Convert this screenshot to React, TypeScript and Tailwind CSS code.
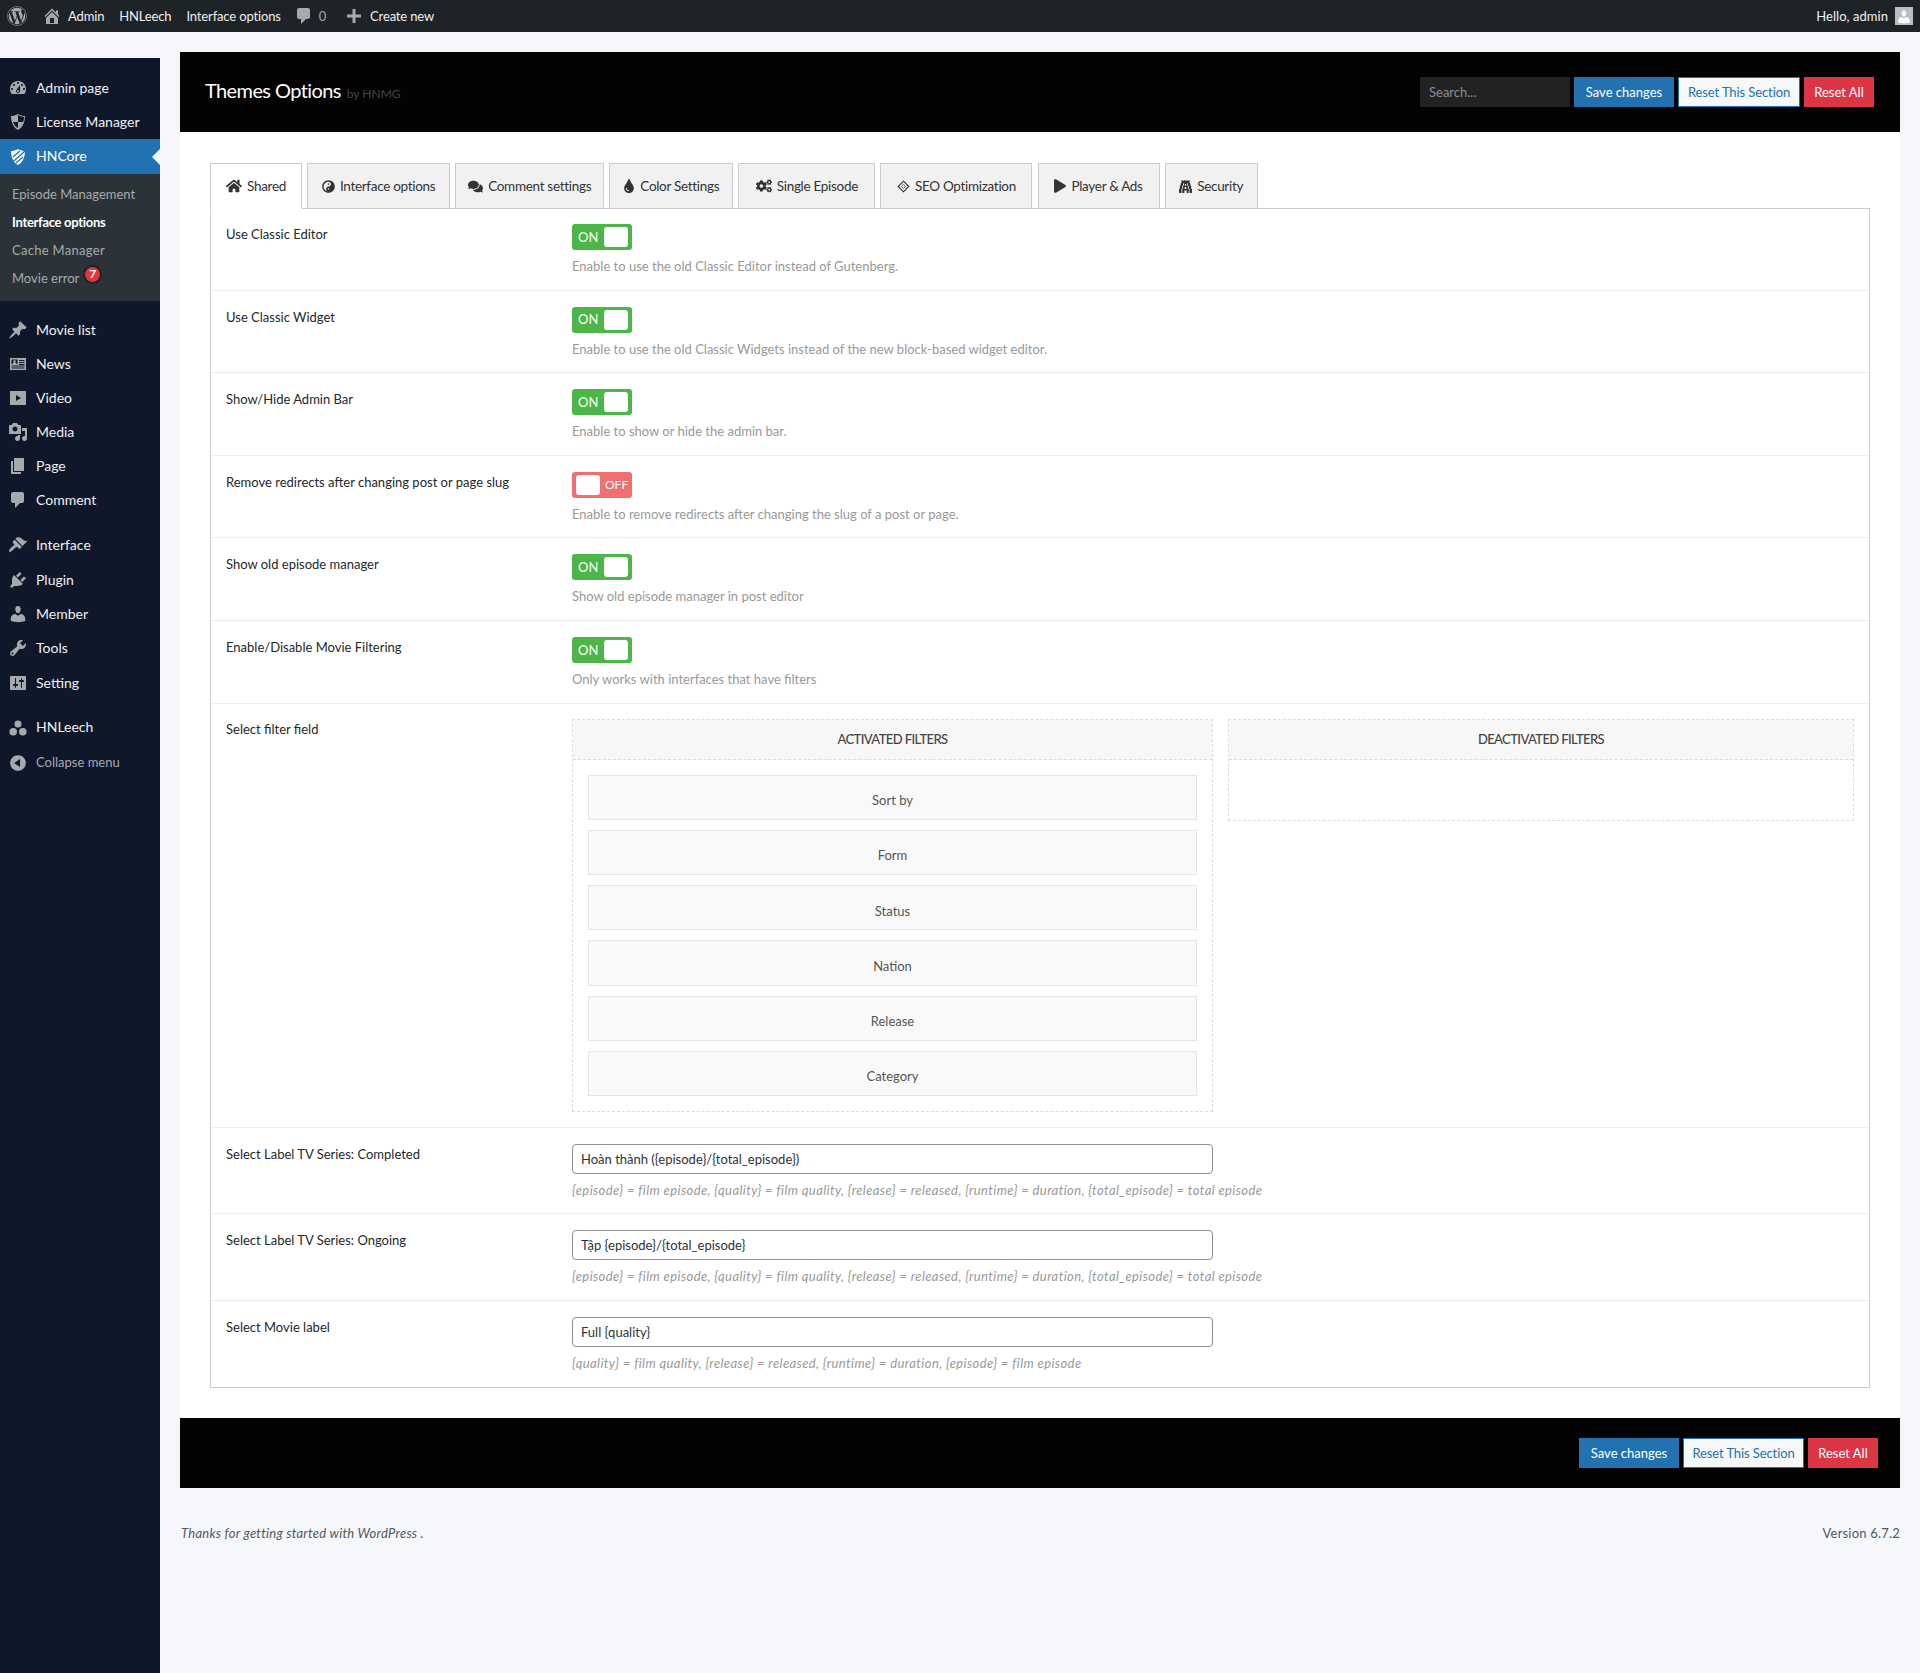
import type { ReactNode } from 'react';
import { FaWordpress, FaHome, FaYinYang, FaComments, FaTint, FaCogs, FaPlay, FaGopuram } from 'react-icons/fa';

const Dash = ({ d, className = 'w-5 h-5 text-[#a7aaad]' }: { d: string; className?: string }) => (
  <svg viewBox="0 0 20 20" className={className} fill="currentColor" fillRule="evenodd">
    <path d={d} />
  </svg>
);

const paths = {
  dashboard:
    'M3.76 16h12.48c1.1-1.37 1.76-3.11 1.76-5 0-4.42-3.58-8-8-8s-8 3.58-8 8c0 1.89.66 3.63 1.76 5zM10 4c.55 0 1 .45 1 1s-.45 1-1 1-1-.45-1-1 .45-1 1-1zM6 6c.55 0 1 .45 1 1s-.45 1-1 1-1-.45-1-1 .45-1 1-1zm8 0c.55 0 1 .45 1 1s-.45 1-1 1-1-.45-1-1 .45-1 1-1zm-5.37 5.55L12 7v6c0 1.1-.9 2-2 2s-2-.9-2-2c0-.57.24-1.08.63-1.45zM4 10c.55 0 1 .45 1 1s-.45 1-1 1-1-.45-1-1 .45-1 1-1zm12 0c.55 0 1 .45 1 1s-.45 1-1 1-1-.45-1-1 .45-1 1-1zm-5 3c0-.55-.45-1-1-1s-1 .45-1 1 .45 1 1 1 1-.45 1-1z',
  shield: 'M10 2s3 2 7 2c0 11-7 14-7 14S3 15 3 4c4 0 7-2 7-2zm0 8H5s1 4 5 6v-6zm0 0h5s1-1 1-5c0 0-5-1-6-2v7z',
  pin: 'M10.44 3.02l1.82-1.82 6.36 6.35-1.83 1.82c-1.05-.68-2.48-.57-3.41.36l-.75.75c-.92.93-1.04 2.35-.35 3.41l-1.83 1.82-2.41-2.41-2.8 2.79c-.42.42-3.38 2.71-3.8 2.29s1.86-3.39 2.28-3.81l2.79-2.79L4.1 9.36l1.83-1.82c1.05.69 2.48.57 3.4-.36l.75-.75c.93-.92 1.05-2.35.36-3.41z',
  news: 'M2 4h16v12H2V4zm1.5 1.5V10h6V5.5h-6zM11 6v1h5.5V6H11zm0 2v1h5.5V8H11zm0 2v1h5.5v-1H11zM3.500 11.500v1h13v-1h-13zm0 2v1h13v-1h-13z M6.500 6a1.200 1.200 0 1 0 .01 0zM4.500 10c0-1.300 1-1.800 2-1.800s2 .5 2 1.800h-4z',
  video: 'M2 3h16v14H2V3zm6 4v6l5-3-5-3z',
  media:
    'M13 11V4c0-.55-.45-1-1-1h-1.670L9 1H5L3.670 3H2c-.55 0-1 .45-1 1v7c0 .55.45 1 1 1h10c.55 0 1-.45 1-1zM7 4.500c1.380 0 2.500 1.120 2.500 2.500S8.380 9.500 7 9.500 4.500 8.380 4.500 7 5.620 4.500 7 4.500zM14 6h5v10.500c0 1.380-1.120 2.500-2.500 2.500S14 17.880 14 16.500s1.120-2.500 2.500-2.500c.17 0 .34.02.5.05V9h-3V6zm-4 8.050V13h2v3.500c0 1.380-1.120 2.500-2.500 2.500S7 17.880 7 16.500 8.120 14 9.500 14c.17 0 .34.02.5.05z',
  page: 'M6 15V2h10v13H6zm-1 1h8v2H3V5h2v11z',
  comment: 'M5 2h9c1.100 0 2 .9 2 2v7c0 1.100-.9 2-2 2h-2l-5 5v-5H5c-1.100 0-2-.9-2-2V4c0-1.100.9-2 2-2z',
  brush:
    'M14.480 11.060L7.410 3.990l1.500-1.500c.5-.56 2.300-.47 3.510.32 1.210.8 1.430 1.280 2.910 2.100 1.180.64 2.450 1.260 4.450.85zm-.71.71L6.700 4.700 4.930 6.470c-.39.39-.39 1.020 0 1.410l1.060 1.060c.39.39.39 1.030 0 1.420-.6.6-1.430 1.110-2.210 1.690-.35.26-.7.53-1.010.84C1.430 13.230.9 15.500 1.400 17.170c1.600-.4 3.100-1.500 4.830-3.340 1.620-1.620 1.800-1.130 2.200-1.480.39-.39 1.020-.39 1.410 0l1.060 1.060c.39.39 1.020.39 1.410 0l1.680-1.680z',
  plugin:
    'M13.110 4.360L9.870 7.600 8 5.730l3.240-3.240c.35-.34 1.050-.2 1.560.32.52.51.66 1.210.31 1.550zm-8 1.770l.91-1.120 9.010 9.010-1.190.84c-.71.71-2.630 1.160-3.820 1.160H6.140L4.900 17.260c-.59.59-1.540.59-2.120 0-.59-.58-.59-1.530 0-2.120l1.240-1.240v-3.880c0-1.130.4-3.190 1.090-3.890zm7.260 3.970l3.240-3.240c.34-.35 1.040-.21 1.550.31.52.51.66 1.210.31 1.550l-3.240 3.250z',
  user: 'M10 9.250c-2.270 0-2.730-3.440-2.730-3.440C7 4.020 7.820 2 9.970 2c2.160 0 2.980 2.020 2.710 3.810 0 0-.41 3.440-2.680 3.440zm0 2.570L12.720 10c2.390 0 4.520 2.330 4.520 4.530v2.490s-3.650 1.130-7.240 1.130c-3.650 0-7.240-1.130-7.240-1.130v-2.490c0-2.250 1.940-4.480 4.470-4.480z',
  tools:
    'M16.680 9.770c-1.340 1.340-3.300 1.670-4.950.99l-5.410 6.520c-.99.99-2.590.99-3.580 0s-.99-2.590 0-3.570l6.520-5.420c-.68-1.650-.35-3.610.99-4.950 1.280-1.280 3.120-1.620 4.720-1.060l-2.890 2.890 2.820 2.820 2.860-2.870c.53 1.580.18 3.390-1.080 4.650zM3.810 16.210c.4.39 1.040.39 1.430 0 .4-.4.4-1.040 0-1.430-.39-.4-1.030-.4-1.430 0-.39.39-.39 1.030 0 1.430z',
  settings:
    'M18 16V4c0-.55-.45-1-1-1H3c-.55 0-1 .45-1 1v12c0 .55.45 1 1 1h14c.55 0 1-.45 1-1zM8 11h1c.55 0 1 .45 1 1s-.45 1-1 1H8v1.500c0 .28-.22.5-.5.5s-.5-.22-.5-.5V13H6c-.55 0-1-.45-1-1s.45-1 1-1h1V5.500c0-.28.22-.5.5-.5s.5.22.5.5V11zm5-2h-1c-.55 0-1-.45-1-1s.45-1 1-1h1V5.500c0-.28.22-.5.5-.5s.5.22.5.5V7h1c.55 0 1 .45 1 1s-.45 1-1 1h-1v5.500c0 .28-.22.5-.5.5s-.5-.22-.5-.5V9z',
  group: 'M10 2.500a3.500 3.500 0 1 1 0 7 3.500 3.500 0 0 1 0-7zM5.200 10a3.800 3.800 0 1 1 0 7.600 3.800 3.800 0 0 1 0-7.600zm9.600 0a3.800 3.800 0 1 1 0 7.600 3.800 3.800 0 0 1 0-7.600z',
  collapse: 'M10 2.160c4.330 0 7.840 3.510 7.840 7.840s-3.510 7.840-7.840 7.840S2.160 14.330 2.160 10 5.710 2.160 10 2.160zm2 11.720V6.120L6.180 9.970z',
  home: 'M16 8.500l1.530 1.530-1.060 1.060L10 4.620l-6.470 6.470-1.060-1.060L10 2.500l4 4v-2h2v4zm-6-2.460l6 5.990V18H4v-5.970zM12 17v-5H8v5h4z',
  plus: 'M17 8.500v3h-5.500V17h-3v-5.500H3v-3h5.500V3h3v5.500H17z',
};

const MenuItem = ({ d, label, tall }: { d: string; label: string; tall?: boolean }) => (
  <div className={`flex items-center text-[14px] text-[#f0f0f1] ${tall ? 'h-[34.4px]' : 'h-[34px]'}`}>
    <div className="w-9 flex justify-center">
      <Dash d={d} />
    </div>
    <span className={tall ? 'pb-px' : 'pb-[2px]'}>{label}</span>
  </div>
);

const Sidebar = () => (
  <aside className="w-40 shrink-0 pt-[26px]">
    <div className="bg-[#0f172a] h-full pt-[13px]">
      <MenuItem d={paths.dashboard} label="Admin page" />
      <MenuItem d={paths.shield} label="License Manager" />
      <div className="relative h-[35px] bg-[#2271b1] flex items-center text-[14px] text-white">
        <div className="w-9 flex justify-center">
          <svg viewBox="0 0 20 20" className="w-5 h-5 text-white" fill="currentColor">
            <path d="M10 2s3 2 7 2c0 11-7 14-7 14S3 15 3 4c4 0 7-2 7-2z" />
            <path d="M2 17.500L17 4M5 10l7-6M8 16l7-6" stroke="#2271b1" strokeWidth="1.300" fill="none" />
          </svg>
        </div>
        <span className="pb-[2px]">HNCore</span>
        <div className="absolute right-0 top-[10px] border-y-[8px] border-r-[8px] border-y-transparent border-r-[#f6f7fb]" />
      </div>
      <div className="bg-[#2c3338] pt-[7px] pb-2 pl-3 text-[13px] text-[#a7aaad]">
        <div className="h-7 flex items-center">Episode Management</div>
        <div className="h-7 flex items-center font-bold text-white tracking-[-0.3px]">Interface options</div>
        <div className="h-7 flex items-center tracking-[0.3px]">Cache Manager</div>
        <div className="h-7 flex items-center">
          Movie error
          <span className="relative -top-[5px] ml-[4px] w-[19px] h-[19px] rounded-full bg-[#e5343a] border-2 border-[#1d2327] text-white text-[12px] font-bold flex items-center justify-center">
            7
          </span>
        </div>
      </div>
      <div className="mt-3">
        <MenuItem d={paths.pin} label="Movie list" />
        <MenuItem d={paths.news} label="News" />
        <MenuItem d={paths.video} label="Video" />
        <MenuItem d={paths.media} label="Media" />
        <MenuItem d={paths.page} label="Page" />
        <MenuItem d={paths.comment} label="Comment" />
      </div>
      <div className="mt-[11px]">
        <MenuItem d={paths.brush} label="Interface" tall />
        <MenuItem d={paths.plugin} label="Plugin" tall />
        <MenuItem d={paths.user} label="Member" tall />
        <MenuItem d={paths.tools} label="Tools" tall />
        <MenuItem d={paths.settings} label="Setting" tall />
      </div>
      <div className="mt-[11px]">
        <MenuItem d={paths.group} label="HNLeech" />
        <div className="flex items-center h-[36px] text-[13px] text-[#a7aaad]">
          <div className="w-9 flex justify-center">
            <Dash d={paths.collapse} />
          </div>
          <span>Collapse menu</span>
        </div>
      </div>
    </div>
  </aside>
);

const BarText = ({ children, className = '' }: { children: ReactNode; className?: string }) => (
  <span className={`pt-[2px] tracking-[-0.15px] ${className}`}>{children}</span>
);

const TopBar = () => (
  <header className="h-8 bg-[#1d2327] flex items-center text-[13px] text-[#f0f0f1]">
    <FaWordpress className="w-5 h-5 ml-[7px] text-[#a7aaad]" />
    <Dash d={paths.home} className="w-5 h-5 ml-[15px] text-[#a7aaad]" />
    <BarText className="ml-[6px]">Admin</BarText>
    <BarText className="ml-[15px]">HNLeech</BarText>
    <BarText className="ml-[15px]">Interface options</BarText>
    <Dash d={paths.comment} className="w-5 h-5 ml-[13px] text-[#a7aaad]" />
    <BarText className="ml-[5px] text-[#a7aaad]">0</BarText>
    <Dash d={paths.plus} className="w-5 h-5 ml-[18px] text-[#a7aaad]" />
    <BarText className="ml-[6px]">Create new</BarText>
    <div className="ml-auto flex items-center mr-[7px]">
      <span className="pt-[2px] tracking-[0.05px]">Hello, admin</span>
      <div className="ml-[7px] w-[18px] h-[18px] bg-[#bdbdbd] flex items-end justify-center overflow-hidden">
        <Dash d={paths.user} className="w-4 h-4 text-white" />
      </div>
    </div>
  </header>
);

const Buttons = ({ resetWidth }: { resetWidth: string }) => (
  <>
    <button className="w-[100px] h-[30px] pt-[2px] bg-[#2271b1] text-white text-[13px]">Save changes</button>
    <button className={`${resetWidth} h-[30px] pt-[2px] ml-1 bg-[#f6f7f7] border border-[#2271b1] text-[#2271b1] text-[13px] tracking-[-0.1px]`}>Reset This Section</button>
    <button className="w-[70px] h-[30px] pt-[2px] ml-1 bg-[#dc3545] text-white text-[13px]">Reset All</button>
  </>
);

const seoIcon = (
  <svg viewBox="0 0 16 16" className="w-[13px] h-[13px]" fill="none" stroke="currentColor">
    <path d="M8 1.500L14.500 8 8 14.500 1.500 8z" strokeWidth="1.400" />
    <path d="M8 5.500L10.500 8 8 10.500 5.500 8z" strokeWidth="1" />
  </svg>
);

const tabs: { label: string; icon: ReactNode; width: string; active?: boolean }[] = [
  { label: 'Shared', icon: <FaHome className="w-4 h-4" />, width: 'w-[92px]', active: true },
  { label: 'Interface options', icon: <FaYinYang className="w-[13px] h-[13px]" />, width: 'w-[143px]' },
  { label: 'Comment settings', icon: <FaComments className="w-[15px] h-[15px]" />, width: 'w-[149px]' },
  { label: 'Color Settings', icon: <FaTint className="w-3 h-[14px]" />, width: 'w-[124px]' },
  { label: 'Single Episode', icon: <FaCogs className="w-4 h-4" />, width: 'w-[137px]' },
  { label: 'SEO Optimization', icon: seoIcon, width: 'w-[152px]' },
  { label: 'Player & Ads', icon: <FaPlay className="w-3 h-[14px]" />, width: 'w-[122px]' },
  { label: 'Security', icon: <FaGopuram className="w-[13px] h-[13px]" />, width: 'w-[93px]' },
];

const Tabs = () => (
  <div className="flex gap-[5.1px] h-[46px] border-b border-[#ccc]">
    {tabs.map((t) => (
      <div
        key={t.label}
        className={`${t.width} h-[46px] border border-[#ccc] flex items-center justify-center gap-[5px] text-[13.500px] tracking-[-0.3px] text-[#333] ${
          t.active ? 'bg-white border-b-white' : 'bg-[#f1f1f1]'
        }`}
      >
        {t.icon}
        <span>{t.label}</span>
      </div>
    ))}
  </div>
);

const Toggle = ({ on }: { on: boolean }) =>
  on ? (
    <div className="w-[60px] h-[26px] rounded-[3px] bg-[#4cb648] flex items-center text-[13px] text-white">
      <span className="ml-[6px] w-[26px] pt-px">ON</span>
      <span className="w-6 h-5 rounded-[3px] bg-white" />
    </div>
  ) : (
    <div className="w-[60px] h-[26px] rounded-[3px] bg-[#ef6f73] flex items-center text-[12px] text-white">
      <span className="ml-1 w-6 h-5 rounded-[3px] bg-white" />
      <span className="ml-[5px]">OFF</span>
    </div>
  );

const SwitchRow = ({ label, on, desc }: { label: string; on: boolean; desc: string }) => (
  <div className="flex h-[82.6px] border-b border-[#eee] pt-4 px-[15px]">
    <div className="w-[346px] text-[13px] leading-5 text-[#23282d]">{label}</div>
    <div>
      <Toggle on={on} />
      <p className="mt-[6px] text-[13px] leading-5 text-[#999]">{desc}</p>
    </div>
  </div>
);

const InputRow = ({ label, value, desc, last }: { label: string; value: string; desc: string; last?: boolean }) => (
  <div className={`flex h-[86.3px] pt-4 px-[15px] ${last ? '' : 'border-b border-[#eee]'}`}>
    <div className="w-[346px] text-[13px] leading-5 text-[#23282d]">{label}</div>
    <div className="flex-1">
      <input
        readOnly
        defaultValue={value}
        className="block w-[641px] h-[30px] px-2 rounded border border-[#8c8f94] bg-white text-[13px] text-[#2c3338] outline-none"
      />
      <p className="mt-[6px] text-[13px] italic leading-5 tracking-[0.4px] text-[#999]">{desc}</p>
    </div>
  </div>
);

const filterItems = ['Sort by', 'Form', 'Status', 'Nation', 'Release', 'Category'];

const FilterHeader = ({ title }: { title: string }) => (
  <div className="h-[40px] pt-[2px] bg-[#f7f7f7] border-b border-dashed border-[#ddd] flex items-center justify-center text-[13px] font-medium tracking-[-0.6px] text-[#444] uppercase">
    {title}
  </div>
);

const FilterRow = () => (
  <div className="flex h-[424.5px] border-b border-[#eee] pt-[15px] px-[15px]">
    <div className="w-[346px] text-[13px] leading-5 text-[#23282d]">Select filter field</div>
    <div className="flex gap-[15px] items-start">
      <div className="w-[641px] border border-dashed border-[#ddd]">
        <FilterHeader title="Activated filters" />
        <div className="p-[15px] flex flex-col gap-[10px]">
          {filterItems.map((f) => (
            <div key={f} className="h-[45.3px] bg-[#f9f9f9] border border-[#e5e5e5] flex items-center justify-center pt-[7px] text-[13px] text-[#555]">
              {f}
            </div>
          ))}
        </div>
      </div>
      <div className="w-[626px] border border-dashed border-[#ddd]">
        <FilterHeader title="Deactivated filters" />
        <div className="h-[60px]" />
      </div>
    </div>
  </div>
);

const hint = '{episode} = film episode, {quality} = film quality, {release} = released, {runtime} = duration, {total_episode} = total episode';

const Panel = () => (
  <div className="-mt-px border-x border-b border-[#ccc]">
    <SwitchRow label="Use Classic Editor" on desc="Enable to use the old Classic Editor instead of Gutenberg." />
    <SwitchRow label="Use Classic Widget" on desc="Enable to use the old Classic Widgets instead of the new block-based widget editor." />
    <SwitchRow label="Show/Hide Admin Bar" on desc="Enable to show or hide the admin bar." />
    <SwitchRow label="Remove redirects after changing post or page slug" on={false} desc="Enable to remove redirects after changing the slug of a post or page." />
    <SwitchRow label="Show old episode manager" on desc="Show old episode manager in post editor" />
    <SwitchRow label="Enable/Disable Movie Filtering" on desc="Only works with interfaces that have filters" />
    <FilterRow />
    <InputRow label="Select Label TV Series: Completed" value="Hoàn thành ({episode}/{total_episode})" desc={hint} />
    <InputRow label="Select Label TV Series: Ongoing" value="Tập {episode}/{total_episode}" desc={hint} />
    <InputRow label="Select Movie label" value="Full {quality}" desc="{quality} = film quality, {release} = released, {runtime} = duration, {episode} = film episode" last />
  </div>
);

export default function App() {
  return (
    <div className="min-h-[1673px] flex flex-col bg-[#f6f7fb] font-[family-name:Lato,sans-serif]">
      <TopBar />
      <div className="flex flex-1">
        <Sidebar />
        <main className="flex-1 pt-5 px-5">
          <div className="h-20 bg-[#030303] flex items-center pl-[25px] pr-[26px]">
            <h1 className="mb-1 text-[20px] tracking-[-0.6px] text-white">Themes Options</h1>
            <span className="ml-[6px] mt-1 text-[12px] text-[#444]">by HNMG</span>
            <div className="ml-auto flex items-center">
              <div className="w-[150px] h-[30px] mr-1 pt-[2px] rounded-[2px] bg-[#222] px-[9px] flex items-center text-[13px] text-[#8c8f94]">Search...</div>
              <Buttons resetWidth="w-[122px]" />
            </div>
          </div>
          <div className="bg-white pt-[31px] px-[30px] pb-[30px]">
            <Tabs />
            <Panel />
          </div>
          <div className="h-[70px] bg-[#030303] flex items-center justify-end pr-[22px]">
            <Buttons resetWidth="w-[121px]" />
          </div>
          <div className="flex justify-between pt-[35px] pl-px text-[13px] leading-5 text-[#50575e]">
            <em className="tracking-[0.25px]">Thanks for getting started with WordPress .</em>
            <span className="tracking-[0.2px]">Version 6.7.2</span>
          </div>
        </main>
      </div>
    </div>
  );
}
